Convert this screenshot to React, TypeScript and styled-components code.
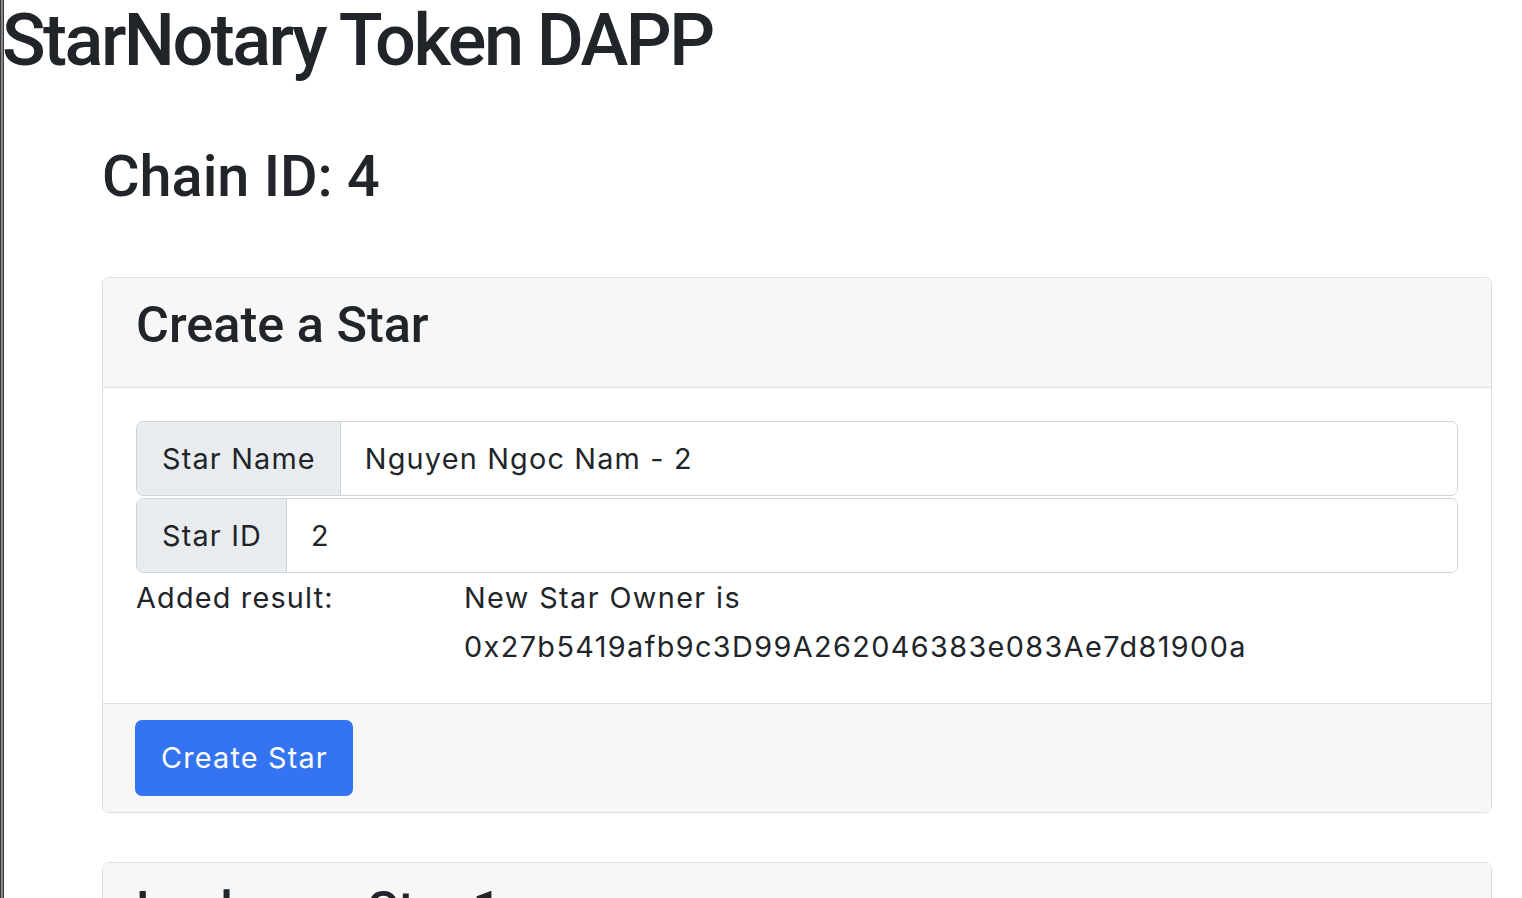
import React from "react";
import styled, { createGlobalStyle } from "styled-components";

const GlobalStyle = createGlobalStyle`
  html, body { margin: 0; padding: 0; background: #ffffff; }
  body {
    font-family: Inter, "Noto Sans", "Liberation Sans", sans-serif;
    color: #212529;
    font-size: 28.8px;
    line-height: 1.5;
    letter-spacing: 1.2px;
  }
  * { box-sizing: border-box; }
`;

const headingFont = `Roboto, Inter, "Liberation Sans", sans-serif`;

const Page = styled.div`
  min-height: 898px;
  box-shadow: inset 1px 0 #3a3a3a, inset 3px 0 #858585, inset 4px 0 #3a3a3a;
  padding: 0 30px 40px 0;
`;

const Title = styled.h1`
  margin: -2px 0 0 2px;
  font-family: ${headingFont};
  font-size: 72px;
  font-weight: 500;
  line-height: 1.2;
  letter-spacing: -2.5px;
`;

const Main = styled.main`
  padding-left: 102px;
`;

const Chain = styled.h2`
  margin: 58px 0 65px 0;
  font-family: ${headingFont};
  font-size: 57.6px;
  font-weight: 500;
  line-height: 1.2;
  letter-spacing: 0;
`;

const Card = styled.section`
  border: 1px solid #dfdfdf;
  border-radius: 7px;
  overflow: hidden;
  margin-bottom: 49px;
  background: #ffffff;
`;

const CardHeader = styled.header`
  background: #f7f7f7;
  border-bottom: 1px solid #dfdfdf;
  padding: 17px 33px 32px;
`;

const CardTitle = styled.h3`
  margin: 0;
  font-family: ${headingFont};
  font-size: 50.4px;
  font-weight: 500;
  line-height: 1.2;
  letter-spacing: 0;
`;

const CardBody = styled.div`
  padding: 33px 33px 32px;
  display: flex;
  flex-direction: column;
  gap: 2px;
`;

const InputGroup = styled.div`
  display: flex;
  height: 75px;
  border: 1px solid #ced4da;
  border-radius: 7px;
  overflow: hidden;
`;

const Addon = styled.span`
  display: flex;
  align-items: center;
  padding: 0 24px 0 25px;
  background: #e9ecef;
  border-right: 1px solid #ced4da;
  white-space: nowrap;
`;

const Field = styled.input`
  flex: 1;
  border: 0;
  outline: none;
  padding: 0 24px;
  font: inherit;
  letter-spacing: inherit;
  color: #212529;
  background: #ffffff;
`;

const ResultRow = styled.div`
  display: grid;
  grid-template-columns: 328px 1fr;
  line-height: 49px;
  margin-top: -2px;
`;

const ResultValue = styled.div`
  display: flex;
  flex-direction: column;
  letter-spacing: 1.4px;
`;

const CardFooter = styled.footer`
  background: #f7f7f7;
  border-top: 1px solid #dfdfdf;
  padding: 16px 32px;
`;

const Button = styled.button`
  height: 76px;
  padding: 0 25px 0 26px;
  border: 0;
  border-radius: 7px;
  background: #3474f0;
  color: #ffffff;
  font: inherit;
  letter-spacing: inherit;
  cursor: pointer;
`;

export default function App() {
  return (
    <>
      <GlobalStyle />
      <Page>
        <Title>StarNotary Token DAPP</Title>
        <Main>
          <Chain>Chain ID: 4</Chain>
          <Card>
            <CardHeader>
              <CardTitle>Create a Star</CardTitle>
            </CardHeader>
            <CardBody>
              <InputGroup>
                <Addon>Star Name</Addon>
                <Field defaultValue="Nguyen Ngoc Nam - 2" />
              </InputGroup>
              <InputGroup>
                <Addon>Star ID</Addon>
                <Field defaultValue="2" />
              </InputGroup>
              <ResultRow>
                <div>Added result:</div>
                <ResultValue>
                  <span>New Star Owner is</span>
                  <span>0x27b5419afb9c3D99A262046383e083Ae7d81900a</span>
                </ResultValue>
              </ResultRow>
            </CardBody>
            <CardFooter>
              <Button>Create Star</Button>
            </CardFooter>
          </Card>
          <Card>
            <CardHeader>
              <CardTitle>Look up a Star 1</CardTitle>
            </CardHeader>
            <CardBody>
              <InputGroup>
                <Addon>Star ID</Addon>
                <Field defaultValue="" />
              </InputGroup>
            </CardBody>
          </Card>
        </Main>
      </Page>
    </>
  );
}
